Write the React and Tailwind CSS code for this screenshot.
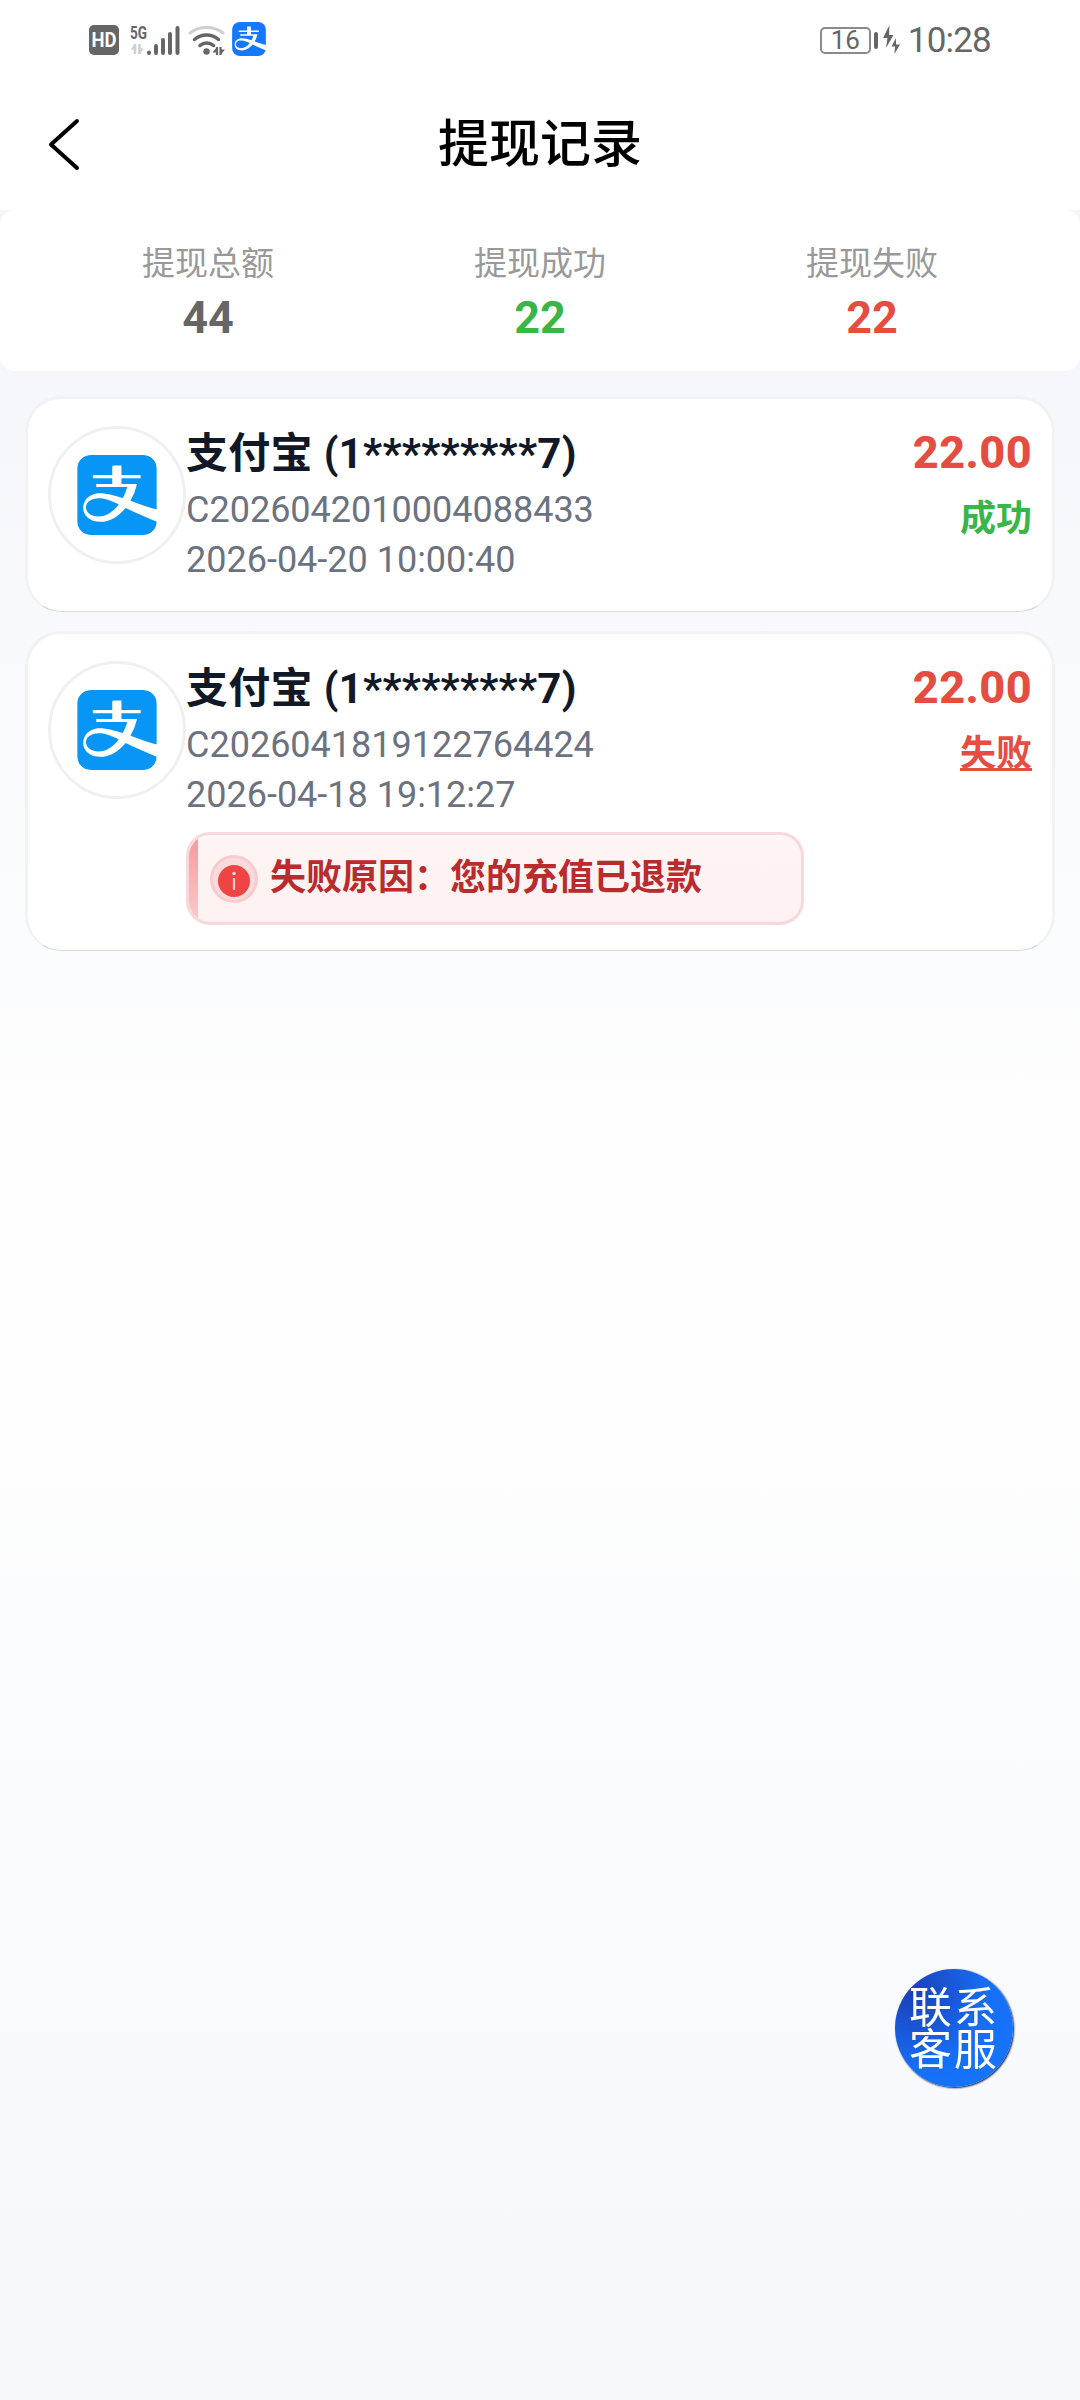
import { SiAlipay } from "react-icons/si";

const stats = [
  { label: "提现总额", value: "44", color: "text-[#666666]" },
  { label: "提现成功", value: "22", color: "text-[#39b54a]" },
  { label: "提现失败", value: "22", color: "text-[#e54d42]" },
];

const records = [
  {
    id: "C2026042010004088433",
    name: "支付宝 (1*********7)",
    time: "2026-04-20 10:00:40",
    amount: "22.00",
    ok: true,
  },
  {
    id: "C2026041819122764424",
    name: "支付宝 (1*********7)",
    time: "2026-04-18 19:12:27",
    amount: "22.00",
    ok: false,
    reason: "失败原因：您的充值已退款",
  },
];

function StatusBar() {
  return (
    <div className="flex h-20 items-center justify-between pl-[89px] pr-[89px] text-[#666666]">
      <div className="flex items-center">
        <svg className="overflow-visible" width="30" height="30" viewBox="0 0 30 30">
          <rect width="30" height="30" rx="5" fill="#666666" />
          <text x="2.500" y="22" fontSize="19.5" fontWeight="700" textLength="25" lengthAdjust="spacingAndGlyphs" fill="white">
            HD
          </text>
        </svg>
        <svg className="ml-[11px] overflow-visible" width="50" height="34" viewBox="0 0 50 34">
          <text x="0" y="15.5" fontSize="19" fontWeight="700" textLength="17" lengthAdjust="spacingAndGlyphs" fill="#666666">
            5G
          </text>
          <path d="M5 21v10M9.500 21v10" stroke="#cfcfcf" strokeWidth="2.600" />
          <path d="M5 21v5.500H0.500zM9.500 31v-5.500H14z" fill="#cfcfcf" />
          <g stroke="#666666" strokeWidth="4" strokeLinecap="round">
            <path d="M19 29.500v0.500M26 23v7M33 17v13M40 11v19M47.500 5v25" />
          </g>
        </svg>
        <svg className="ml-[8px]" width="38" height="34" viewBox="0 0 38 34" fill="none" strokeLinecap="round">
          <path d="M2 10C11 2.500 26 2.500 35 10" stroke="#cfcfcf" strokeWidth="3" />
          <path d="M6.500 16.500C13.500 10.500 23.500 10.500 30.500 16.500" stroke="#666666" strokeWidth="3.500" />
          <path d="M12 22.500C16 19 21.500 19 25.500 22.500" stroke="#666666" strokeWidth="3.500" />
          <circle cx="18.500" cy="28.500" r="3.200" fill="#666666" />
          <path d="M29 24v8M32.500 24v8" stroke="#666666" strokeWidth="2.200" strokeLinecap="butt" />
          <path d="M29 24v5.500H24.500zM32.500 32v-5.500H37z" fill="#666666" />
        </svg>
        <div className="ml-[6px] -mt-0.5 flex h-[34px] w-[34px] items-center justify-center overflow-hidden rounded-[8px]">
          <SiAlipay size={34} color="#1677ff" className="shrink-0" />
        </div>
      </div>
      <div className="flex items-center">
        <div className="flex h-[27px] w-[51px] items-center justify-center rounded-[5px] border-2 border-[#8a8a8a] text-[26px] leading-none">
          16
        </div>
        <div className="ml-[3px] h-[17px] w-1 rounded-sm bg-[#666666]" />
        <svg className="ml-[5px]" width="17" height="30" viewBox="0 0 17 30" fill="#666666">
          <path d="M6.500 0L0 13h4.500L3 23L10.500 10H6z" />
          <path d="M13 13L8.500 21.500h3.500L11.500 29L17 19.500h-4z" />
        </svg>
        <span className="ml-[8px] text-[35px] leading-none tracking-[-0.8px]">10:28</span>
      </div>
    </div>
  );
}

function Record({ record }) {
  return (
    <div className="flex rounded-[36px] border-[3px] border-b border-[#f1f2f3] border-b-[#d6d9de] bg-white px-5 pt-[27px] pb-[25px]">
      <div className="flex h-[138px] w-[138px] shrink-0 items-center justify-center rounded-full border-[3px] border-[#f0f0f1]">
        <div className="overflow-hidden rounded-[14px]">
          <SiAlipay size={80} color="#0796f5" />
        </div>
      </div>
      <div className="flex-1">
        <div className="text-[42px] leading-[55px] font-bold tracking-[0.3px] text-[#111827]">{record.name}</div>
        <div className="mt-1 text-[36px] leading-[51px] text-[#6b7280]">{record.id}</div>
        <div className="-mt-px text-[36px] leading-[51px] text-[#6b7280]">{record.time}</div>
        {record.reason && (
          <div className="relative mt-[11px] flex h-[93px] w-[618px] items-center overflow-hidden rounded-[24px] border-[3px] border-[#f8d9db] bg-linear-to-b from-[#fff5f5] to-[#fdf1f1] pl-[21px]">
            <div className="absolute inset-y-0 left-0 w-[9px] bg-linear-to-b from-[#f4999d] to-[#fbcaca]" />
            <div className="flex h-12 w-12 items-center justify-center rounded-full border-[3px] border-[#f8cccf] bg-[#fadadb]">
              <svg className="mt-[5px]" width="32" height="32" viewBox="0 0 32 32">
                <circle cx="16" cy="16" r="16" fill="#ef4444" />
                <circle cx="16" cy="8.500" r="1.700" fill="#ffe4e4" />
                <path d="M16 13v12" stroke="#fccaca" strokeWidth="2.200" />
              </svg>
            </div>
            <span className="ml-3 text-[36px] leading-[51px] font-bold text-[#b92b2d]">{record.reason}</span>
          </div>
        )}
      </div>
      <div className="text-right font-bold">
        <div className="text-[45px] leading-[54px] font-extrabold tracking-[0.4px] text-[#e54d42]">{record.amount}</div>
        <div
          className={
            record.ok
              ? "mt-[14px] text-[36px] leading-[51px] text-[#39b54a]"
              : "mt-[14px] text-[36px] leading-[51px] text-[#e54d42] underline decoration-[3px]"
          }
        >
          {record.ok ? "成功" : "失败"}
        </div>
      </div>
    </div>
  );
}

export default function App() {
  return (
    <div className="h-[2400px] w-[1080px] bg-[linear-gradient(to_bottom,#f5f7fc_16%,#fefefe_48%,#fefefe_58%,#f6f8fc_94%)] font-['Roboto','Noto_Sans_CJK_SC',sans-serif]">
      <div className="h-[210px] bg-white">
        <StatusBar />
        <div className="relative flex h-[130px] items-center justify-center">
          <svg className="absolute top-[38px] left-[47px]" width="34" height="53" viewBox="0 0 34 53" fill="none">
            <path d="M30 3L4 26.500L30 50" stroke="black" strokeWidth="4" strokeLinecap="round" strokeLinejoin="round" />
          </svg>
          <h1 className="text-[51px] font-medium text-black">提现记录</h1>
        </div>
      </div>

      <div className="grid h-[161px] grid-cols-3 rounded-[15px] bg-white px-[42px] pt-[28px] text-center">
        {stats.map((s) => (
          <div key={s.label}>
            <div className="text-[33px] leading-[51px] text-[#999999]">{s.label}</div>
            <div className={`text-[45px] leading-[57px] font-bold ${s.color}`}>{s.value}</div>
          </div>
        ))}
      </div>

      <div className="mt-[25px] flex flex-col gap-[19px] px-[25px]">
        {records.map((r) => (
          <Record key={r.id} record={r} />
        ))}
      </div>

      <button className="fixed top-[1969px] left-[895px] h-[118px] w-[118px] rounded-full bg-[radial-gradient(circle_at_15%_20%,#1d3fb8_0%,#156ff5_55%,#1677ff_100%)] pt-[2px] text-[43px] leading-[42px] tracking-[2px] text-white shadow-[1px_1px_2px_#0b1c3c]">
        联系
        <br />
        客服
      </button>
    </div>
  );
}
